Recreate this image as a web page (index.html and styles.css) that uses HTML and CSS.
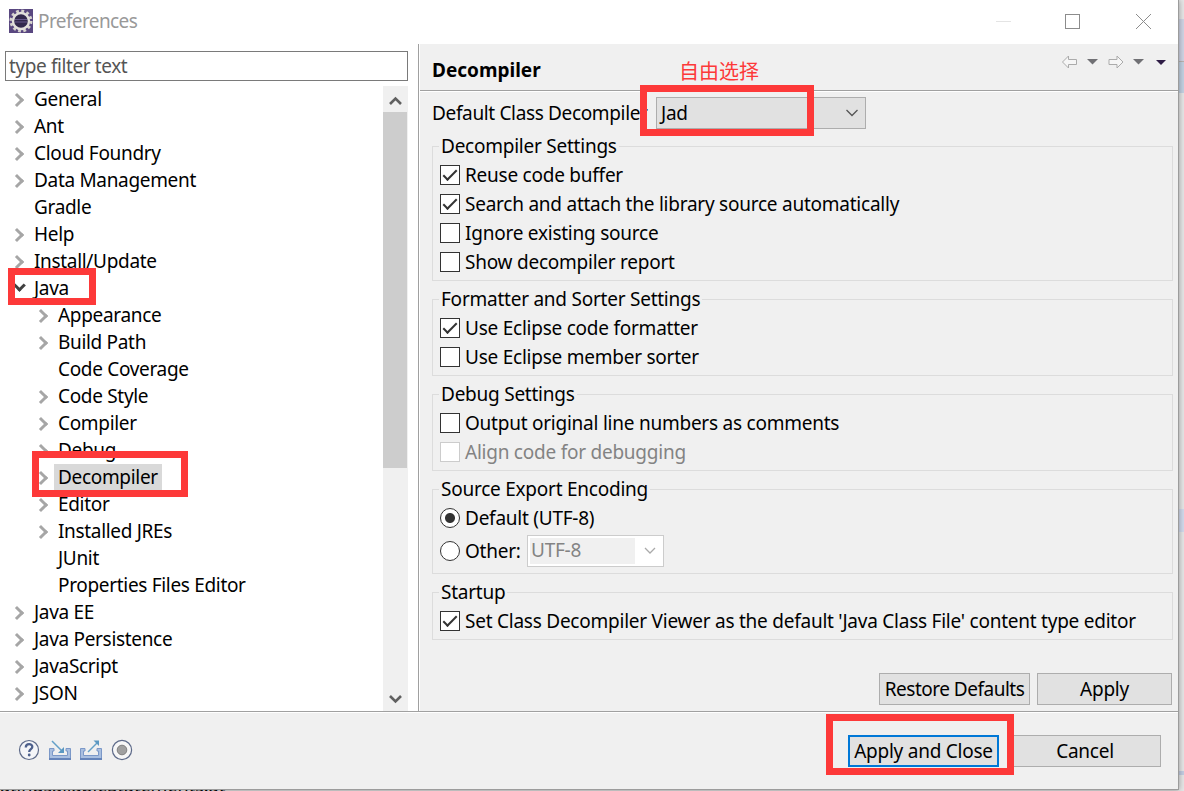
FILE: index.html
```html
<!DOCTYPE html>
<html lang="en">
<head>
    <meta charset="UTF-8">
    <meta name="viewport" content="width=device-width, initial-scale=1.0">
    <title>Preferences</title>
    <link rel="stylesheet" href="styles.css">
</head>
<body>
    <!-- editor behind the dialog -->
    <div class="behind-right">
        <i class="tab"></i><i class="tab-line"></i><i class="tool"></i><i class="mark"></i><i class="foot"></i>
    </div>
    <div class="behind-bottom">atingsailableStatements.at</div>

    <div class="dialog">
        <header class="titlebar">
            <svg class="app-icon" width="24" height="24" viewBox="0 0 24 24">
                <rect width="24" height="24" fill="#594780"/>
                <circle cx="12" cy="12" r="10" fill="none" stroke="#d6d3ce" stroke-width="3" stroke-dasharray="2.8 2.436"/>
                <circle cx="12" cy="12" r="8" fill="#32284d" stroke="#e2e0dc" stroke-width="2.4"/>
                <path d="M6 10.5h12M6 13h12" stroke="#66598c" stroke-width="1.2"/>
            </svg>
            <span class="title">Preferences</span>
            <svg class="window-buttons" width="160" height="20" viewBox="0 0 160 20" fill="none" stroke="#8c8c8c">
                <path d="M1 9.500h15" stroke="#e4e4e4"/>
                <rect x="70.500" y="2.500" width="14" height="14"/>
                <path d="M141 2l15 15M156 2l-15 15"/>
            </svg>
        </header>

        <main class="main">
            <aside class="sidebar">
                <input class="filter" type="text" placeholder="type filter text">
                <div class="tree-wrap">
                    <ul class="tree">
                        <li class="closed">General</li>
                        <li class="closed">Ant</li>
                        <li class="closed">Cloud Foundry</li>
                        <li class="closed">Data Management</li>
                        <li>Gradle</li>
                        <li class="closed">Help</li>
                        <li class="closed">Install/Update</li>
                        <li class="open">Java</li>
                        <li class="sub closed">Appearance</li>
                        <li class="sub closed">Build Path</li>
                        <li class="sub">Code Coverage</li>
                        <li class="sub closed">Code Style</li>
                        <li class="sub closed">Compiler</li>
                        <li class="sub closed">Debug</li>
                        <li class="sub closed"><span class="selected">Decompiler</span></li>
                        <li class="sub closed">Editor</li>
                        <li class="sub closed">Installed JREs</li>
                        <li class="sub">JUnit</li>
                        <li class="sub">Properties Files Editor</li>
                        <li class="closed">Java EE</li>
                        <li class="closed">Java Persistence</li>
                        <li class="closed">JavaScript</li>
                        <li class="closed">JSON</li>
                    </ul>
                    <div class="scrollbar">
                        <svg width="25" height="26" viewBox="0 0 25 26"><path d="M7 18l5.500-5.500 5.500 5.500" fill="none" stroke="#606060" stroke-width="2.600"/></svg>
                        <div class="thumb"></div>
                        <svg class="down" width="25" height="26" viewBox="0 0 25 26"><path d="M7 11l5.500 5.500 5.500-5.500" fill="none" stroke="#606060" stroke-width="2.600"/></svg>
                    </div>
                </div>
            </aside>

            <section class="page">
                <div class="page-header">
                    <h1>Decompiler</h1>
                    <svg class="history" width="106" height="14" viewBox="0 0 106 14">
                        <path d="M.500 7l6-6v3.500h8v5h-8v3.500z" fill="#f6f6f6" stroke="#ababab" stroke-linejoin="round"/>
                        <path d="M25 4h11l-5.500 5.500z" fill="#707074"/>
                        <path d="M61 7l-6-6v3.500h-8v5h8v3.500z" fill="#f6f6f6" stroke="#ababab" stroke-linejoin="round"/>
                        <path d="M71 4h11l-5.500 5.500z" fill="#707074"/>
                        <path d="M94 5h10l-5 5z" fill="#2e1c45"/>
                    </svg>
                </div>

                <div class="page-body">
                    <div class="combo-row">
                        <label class="t-default">Default Class Decompiler</label>
                        <div class="combo">Jad
                            <svg width="12" height="8" viewBox="0 0 12 8"><path d="M.500 1l5.500 5.500 5.500-5.500" fill="none" stroke="#555" stroke-width="1.300"/></svg>
                        </div>
                    </div>

                    <fieldset>
                        <legend>Decompiler Settings</legend>
                        <label class="row"><i class="check on"></i>Reuse code buffer</label>
                        <label class="row"><i class="check on"></i>Search and attach the library source automatically</label>
                        <label class="row"><i class="check"></i>Ignore existing source</label>
                        <label class="row"><i class="check"></i>Show decompiler report</label>
                    </fieldset>
                    <fieldset>
                        <legend>Formatter and Sorter Settings</legend>
                        <label class="row"><i class="check on"></i>Use Eclipse code formatter</label>
                        <label class="row"><i class="check"></i>Use Eclipse member sorter</label>
                    </fieldset>
                    <fieldset>
                        <legend>Debug Settings</legend>
                        <label class="row"><i class="check"></i>Output original line numbers as comments</label>
                        <label class="row disabled"><i class="check"></i>Align code for debugging</label>
                    </fieldset>
                    <fieldset>
                        <legend>Source Export Encoding</legend>
                        <label class="row"><i class="radio on"></i>Default (UTF-8)</label>
                        <div class="row other">
                            <i class="radio"></i><label class="t-other">Other:</label>
                            <div class="encoding"><span>UTF-8</span>
                                <svg width="12" height="8" viewBox="0 0 12 8"><path d="M1 1l5 5 5-5" fill="none" stroke="#aaa" stroke-width="1.300"/></svg>
                            </div>
                        </div>
                    </fieldset>
                    <fieldset>
                        <legend>Startup</legend>
                        <label class="row"><i class="check on"></i>Set Class Decompiler Viewer as the default 'Java Class File' content type editor</label>
                    </fieldset>

                    <div class="page-buttons">
                        <button class="restore">Restore Defaults</button>
                        <button class="apply">Apply</button>
                    </div>
                </div>
            </section>
        </main>

        <footer class="footer">
            <div class="footer-icons">
                <svg width="22" height="22" viewBox="0 0 22 22">
                    <circle cx="11" cy="11" r="9.500" fill="#f4f5f8" stroke="#5d6a89" stroke-width="1.200"/>
                    <path d="M7.800 8.500c0-4.500 6.700-4.300 6.500-.500-.100 2.200-3.100 2.200-3.100 5" fill="none" stroke="#4d608c" stroke-width="2.300"/>
                    <circle cx="11.200" cy="16" r="1.400" fill="#4d608c"/>
                </svg>
                <svg width="22" height="22" viewBox="0 0 22 22">
                    <path d="M5 9.500H.500v11h21v-11H17v2.500h1.500v4.500h-15V12H5z" fill="#a9bfe0" stroke="#7b98c8"/>
                    <path d="M0 20h22" stroke="#6584ba" stroke-width="2"/>
                    <path d="M3 2l10 10" stroke="#64a0c8" stroke-width="1.500"/>
                    <path d="M15 8v6H9z" fill="#5b98c2"/>
                </svg>
                <svg width="22" height="22" viewBox="0 0 22 22">
                    <path d="M5 9.500H.500v11h21v-11H17v2.500h1.500v4.500h-15V12H5z" fill="#a9bfe0" stroke="#7b98c8"/>
                    <path d="M0 20h22" stroke="#6584ba" stroke-width="2"/>
                    <path d="M8 13L17 4" stroke="#64a0c8" stroke-width="1.500"/>
                    <path d="M13.500 1.500H19v5.500z" fill="#5b98c2"/>
                </svg>
                <svg width="22" height="22" viewBox="0 0 22 22">
                    <circle cx="11" cy="11" r="9.600" fill="#f7f7f7" stroke="#5d6a89" stroke-width="1.200"/>
                    <circle cx="11" cy="11" r="4.800" fill="#a0a0a0" stroke="#808080"/>
                </svg>
            </div>
            <div class="footer-buttons">
                <button class="primary">Apply and Close</button>
                <button class="cancel">Cancel</button>
            </div>
        </footer>
    </div>

    <!-- annotations drawn over the dialog -->
    <div class="mark-box mark-java"></div>
    <div class="mark-box mark-decompiler"></div>
    <div class="mark-box mark-combo"></div>
    <div class="mark-box mark-close"></div>
    <div class="mark-text">自由选择</div>
</body>
</html>
```
FILE: styles.css
```css
* {
    box-sizing: border-box;
}

body {
    margin: 0;
    width: 1184px;
    height: 791px;
    overflow: hidden;
    position: relative;
    background: #dedede;
    color: #000;
    font-family: "Noto Sans", "Noto Sans CJK SC", sans-serif;
    font-size: 19px;
    line-height: 27px;
    letter-spacing: -0.24px;
}

button, input {
    font: inherit;
    color: inherit;
    letter-spacing: inherit;
}

svg {
    display: block;
    flex: none;
}

.dialog {
    position: relative;
    width: 1179px;
    height: 790px;
    display: flex;
    flex-direction: column;
    background: #f0f0f0;
    border-right: 1px solid #9c9c9c;
    border-bottom: 1px solid #9c9c9c;
    box-shadow: 0 0 6px rgba(0, 0, 0, .35);
}

.behind-right {
    position: absolute;
    top: 0;
    right: 0;
    width: 6px;
    height: 791px;
    display: flex;
    flex-direction: column;
    background: #e6e6e6;
}

.behind-right .tab { height: 42px; margin-top: 19px; background: #cfd4e4; }
.behind-right .tab-line { height: 1px; background: #b8b4b0; }
.behind-right .tool { height: 31px; background: #c3d1e2; }
.behind-right .mark { height: 23px; margin-top: 416px; background: #d1daec; }
.behind-right .foot { height: 4px; margin-top: 239px; background: #c3cde2; }

.behind-bottom {
    position: absolute;
    top: 774px;
    left: 0;
    line-height: 22px;
    font-size: 18px;
    letter-spacing: 0;
    white-space: nowrap;
}

/* title bar */
.titlebar {
    height: 44px;
    flex: none;
    display: flex;
    align-items: center;
    padding: 0 23px 2px 9px;
    background: #fff;
}

.title {
    margin-left: 5px;
    color: #999;
    letter-spacing: -0.600px;
}

.window-buttons {
    margin: 2px 0 0 auto;
}

.main {
    height: 668px;
    flex: none;
    display: flex;
    background: #f0f0f0;
    border-bottom: 1px solid #a0a0a0;
}

/* left side */
.sidebar {
    width: 419px;
    flex: none;
    padding: 7px 10px 0 5px;
    background: #fff;
    border-right: 1px solid #a0a0a0;
}

.filter {
    display: block;
    width: 403px;
    height: 30px;
    padding: 0 3px;
    border: 1px solid #7a7a7a;
    outline: none;
    letter-spacing: -0.400px;
}

.filter::placeholder {
    color: #555;
    opacity: 1;
}

.tree-wrap {
    display: flex;
    margin-top: 5px;
    height: 625px;
}

.tree {
    flex: 1;
    margin: 0;
    padding: 0;
    list-style: none;
    letter-spacing: -0.320px;
}

.tree li {
    height: 27px;
    padding-left: 29px;
    position: relative;
    white-space: nowrap;
}

.tree .sub {
    padding-left: 53px;
}

.closed::before,
.open::before {
    content: "";
    position: absolute;
    left: 7px;
    top: 9px;
    width: 7px;
    height: 7px;
    border: solid #a6a6a6;
    border-width: 3px 3px 0 0;
    transform: rotate(45deg);
}

.sub.closed::before {
    left: 31px;
}

.open::before {
    left: 10px;
    top: 6px;
    width: 6px;
    height: 6px;
    border-color: #404040;
    transform: rotate(135deg);
}

.selected {
    display: inline-block;
    margin-left: -4px;
    padding: 0 4px;
    background: #d9d9d9;
}

.scrollbar {
    width: 25px;
    display: flex;
    flex-direction: column;
    background: #f0f0f0;
}

.thumb {
    width: 24px;
    height: 356px;
    background: #cdcdcd;
}

.scrollbar .down {
    margin-top: auto;
}

/* right side */
.page {
    flex: 1;
    border-left: 1px solid #fff;
}

.page-header {
    height: 47px;
    display: flex;
    justify-content: space-between;
    padding: 13px 10px 0 12px;
    border-bottom: 1px solid #a0a0a0;
    box-shadow: 0 1px #fff;
}

h1 {
    margin: 0;
    font-size: 19px;
    line-height: 27px;
    letter-spacing: 0;
}

.history {
    margin-top: -2px;
}

.page-body {
    padding: 6px 5px 0 12px;
}

.combo-row {
    display: flex;
    height: 39px;
    line-height: 32px;
}

.t-default {
    width: 224px;
    white-space: nowrap;
    letter-spacing: -0.350px;
}

.combo {
    width: 210px;
    height: 32px;
    display: flex;
    align-items: center;
    justify-content: space-between;
    padding: 0 7px 0 4px;
    background: #e1e1e1;
    border: 1px solid #adadad;
}

fieldset {
    margin: 0 0 8px;
    padding: 5px 7px 3px;
    border: 1px solid #dcdcdc;
}

legend {
    height: 20px;
    margin-left: -1px;
    padding: 0 2px;
    line-height: 20px;
}

.row {
    height: 29px;
    display: flex;
    align-items: center;
    white-space: nowrap;
}

.other {
    height: 37px;
}

.t-other {
    width: 54px;
}

.disabled {
    color: #838383;
}

.check,
.radio {
    width: 20px;
    height: 20px;
    flex: none;
    margin: 0 5px 1px 0;
    background: #fff;
    border: 1px solid #333;
}

.check.on::before {
    content: "";
    display: block;
    width: 12px;
    height: 5px;
    margin: 4px 0 0 2px;
    border: solid #333;
    border-width: 0 0 2px 2px;
    transform: rotate(-45deg);
}

.disabled .check {
    border-color: #ccc;
}

.radio {
    border-radius: 50%;
}

.radio.on {
    background: radial-gradient(circle, #333 4.500px, #fff 5.500px);
}

.encoding {
    width: 137px;
    height: 32px;
    display: flex;
    align-items: center;
    justify-content: space-between;
    margin: 0 0 1px 8px;
    padding: 2px 7px 2px 2px;
    color: #838383;
    background: #fff;
    border: 1px solid #ccc;
}

.encoding span {
    width: 105px;
    height: 26px;
    padding-left: 1px;
    background: #f0f0f0;
    line-height: 25px;
}

button {
    height: 32px;
    padding: 0;
    background: #e1e1e1;
    border: 1px solid #adadad;
    white-space: nowrap;
}

.page-buttons {
    display: flex;
    justify-content: flex-end;
    gap: 7px;
    margin: 33px 1px 0 0;
}

.restore, .primary { width: 151px; }
.restore { letter-spacing: -0.500px; }
.apply { width: 135px; }
.cancel { width: 152px; }

.primary {
    border: 2px solid #0078d7;
}

/* bottom bar */
.footer {
    flex: 1;
    display: flex;
    justify-content: space-between;
    padding: 22px 17px 0 18px;
    border-top: 1px solid #fff;
}

.footer-icons {
    display: flex;
    gap: 9px;
    padding-top: 4px;
}

.footer-buttons {
    display: flex;
    gap: 10px;
}

/* red marks */
.mark-box {
    position: absolute;
    border: 7px solid #fd3939;
}

.mark-java { left: 8px; top: 268px; width: 88px; height: 37px; }
.mark-decompiler { left: 32px; top: 451px; width: 156px; height: 46px; }
.mark-combo { left: 640px; top: 85px; width: 174px; height: 51px; }
.mark-close { left: 826px; top: 714px; width: 188px; height: 61px; }

.mark-text {
    position: absolute;
    left: 679px;
    top: 57px;
    color: #fd3939;
    font-family: "Noto Sans CJK SC", sans-serif;
    font-size: 20px;
    letter-spacing: 0;
}
```
